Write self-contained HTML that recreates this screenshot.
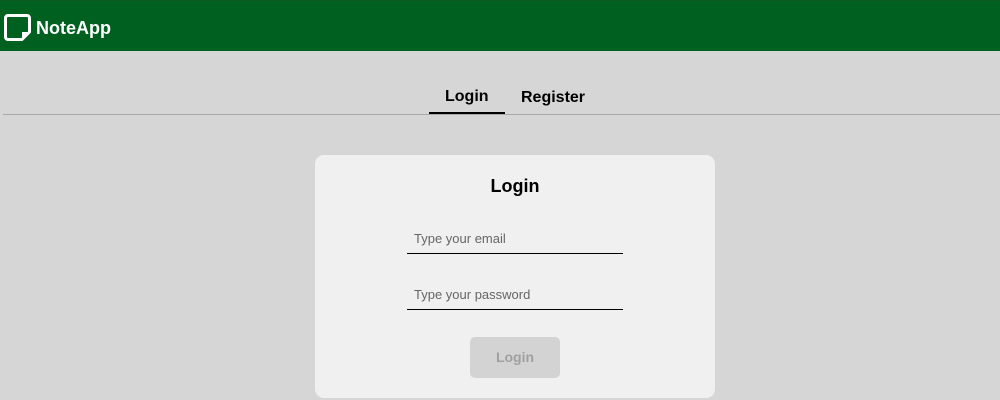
<!DOCTYPE html>
<html><head><meta charset="utf-8"><style>
*{margin:0;padding:0;box-sizing:border-box}
body{width:1000px;height:400px;background:#d6d6d6;font-family:"Liberation Sans",Arial,sans-serif;position:relative;overflow:hidden}
.hdr{position:absolute;left:0;top:0;width:1000px;height:51px;background:#006020;border-top:1px solid #0a5a1e}
.hdr svg{position:absolute;left:3px;top:12px}
.hdr span{position:absolute;left:36px;top:17px;color:#fff;font-weight:bold;font-size:18px}
.tabline{position:absolute;left:3px;top:114px;width:997px;height:1px;background:#a8a8a8}
.tab{position:absolute;top:88px;font-weight:bold;font-size:16px;color:#000}
.ul{position:absolute;left:429px;top:112px;width:76px;height:2px;background:#000}
.card{position:absolute;left:315px;top:155px;width:400px;height:243px;background:#f0f0f0;border-radius:9px}
.card h2{position:absolute;top:21px;width:100%;text-align:center;font-size:18px;font-weight:bold;color:#000}
.inp{position:absolute;left:92px;width:216px;height:1px;background:#000}
.ph{position:absolute;left:99px;font-size:13px;color:#666}
.btn{position:absolute;left:155px;top:182px;width:90px;height:41px;background:#d3d3d3;border-radius:5px;color:#a0a0a0;font-size:14px;font-weight:bold;text-align:center;line-height:41px}
</style></head><body>
<div class="hdr">
<svg width="29" height="29" viewBox="0 0 29 29"><path d="M5 2.5h19a2.5 2.5 0 0 1 2.5 2.5v14L19 26.5H5A2.5 2.5 0 0 1 2.5 24V5A2.5 2.5 0 0 1 5 2.5z" fill="none" stroke="#fff" stroke-width="3" stroke-linejoin="round"/><path d="M26.5 19H19v7.5z" fill="#fff"/></svg>
<span>NoteApp</span></div>
<div class="tab" style="left:445px">Login</div>
<div class="tab" style="left:521px;top:89px">Register</div>
<div class="tabline"></div><div class="ul"></div>
<div class="card">
<h2>Login</h2>
<div class="ph" style="top:76px">Type your email</div>
<div class="inp" style="top:98px"></div>
<div class="ph" style="top:132px">Type your password</div>
<div class="inp" style="top:154px"></div>
<div class="btn">Login</div>
</div>
</body></html>
